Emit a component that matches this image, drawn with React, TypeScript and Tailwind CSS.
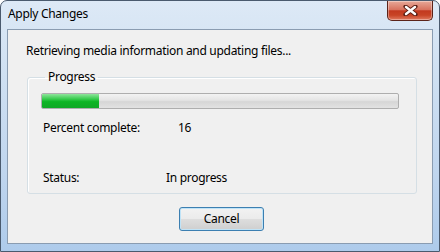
import React from "react";

function CloseButton() {
  return (
    <button className="flex h-[20px] w-[46px] items-center justify-center rounded-b-[5px] border border-t-0 border-[#5b2319] bg-[linear-gradient(to_bottom,#e7a999_0%,#d8735f_45%,#c2391f_52%,#c84426_75%,#e07a60_100%)] shadow-[inset_0_0_0_1px_rgba(255,255,255,0.35)]">
      <svg width="15" height="11" viewBox="0 0 15 11">
        <path d="M2.5 1.5 L12.5 9.5 M12.5 1.5 L2.5 9.5" stroke="#5a1e14" strokeWidth="4.2" strokeLinecap="round" />
        <path d="M3 2 L12 9 M12 2 L3 9" stroke="#ffffff" strokeWidth="2.4" strokeLinecap="round" />
      </svg>
    </button>
  );
}

function ProgressBar({ value }: { value: number }) {
  return (
    <div className="h-[16px] w-[358px] overflow-hidden rounded-[2px] border border-[#aeaeae] bg-[linear-gradient(to_bottom,#f3f3f3_0%,#e4e4e4_45%,#d6d6d6_55%,#e2e2e2_100%)]">
      <div
        className="h-full bg-[linear-gradient(to_bottom,#8ee59b_0%,#39cc4f_35%,#0db524_55%,#10a826_100%)]"
        style={{ width: `${value}%` }}
      />
    </div>
  );
}

export default function App() {
  return (
    <div className="flex h-[252px] w-[440px] flex-col rounded-t-[7px] border border-[#4a5a6e] bg-[linear-gradient(to_bottom,#dde9f6_0%,#cfe0f2_30%,#bfd5ee_70%,#aecbeb_100%)] px-[6px] pb-[7px] font-['Noto_Sans',sans-serif] text-[12px] tracking-[-0.3px] text-black">
      <div className="flex h-[28px] items-start justify-between">
        <span className="ml-[1px] mt-[5px] leading-[16px]">Apply Changes</span>
        <CloseButton />
      </div>
      <div className="flex flex-1 flex-col border border-[#8a9cb1] bg-[#f0f0f0]">
        <p className="ml-[18px] mt-[13px] leading-[16px]">
          Retrieving media information and updating files...
        </p>
        <fieldset className="ml-[19px] mt-[10px] h-[125px] w-[390px] rounded-[3px] border border-[#d5dfe5] px-[13px] shadow-[inset_1px_1px_0_#ffffff]">
          <legend className="ml-[4px] px-[3px] leading-[16px]">Progress</legend>
          <div className="mt-[8px]">
            <ProgressBar value={16} />
          </div>
          <div className="mt-[11px] flex leading-[16px]">
            <span className="ml-[2px] w-[135px]">Percent complete:</span>
            <span>16</span>
          </div>
          <div className="mt-[34px] flex leading-[16px]">
            <span className="ml-[2px] w-[123px]">Status:</span>
            <span>In progress</span>
          </div>
        </fieldset>
        <div className="ml-[171px] mt-[13px]">
          <button className="h-[24px] w-[85px] rounded-[3px] border border-[#3c7fb1] bg-[linear-gradient(to_bottom,#f2f2f2_0%,#ebebeb_48%,#dddddd_52%,#cfcfcf_100%)] leading-[16px] shadow-[inset_0_0_0_1px_#bfe3f7]">
            Cancel
          </button>
        </div>
      </div>
    </div>
  );
}
